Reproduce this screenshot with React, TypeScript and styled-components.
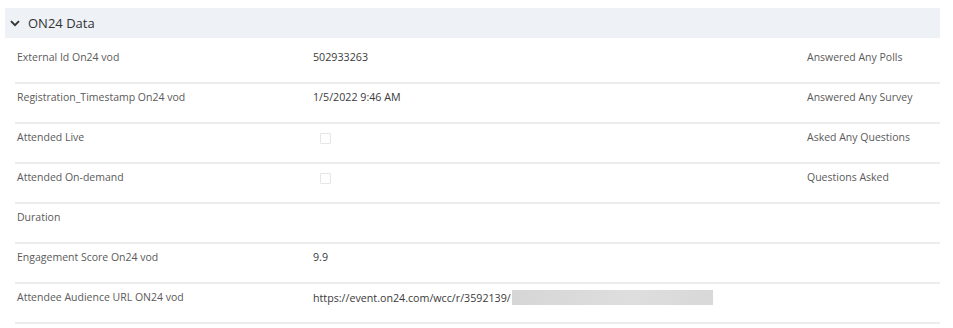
import styled, { createGlobalStyle } from "styled-components";

const GlobalStyle = createGlobalStyle`
  body {
    margin: 0;
    background: #ffffff;
    font-family: "Open Sans", "Noto Sans", sans-serif;
  }
`;

const Page = styled.div`
  padding: 8px 13px 0 5px;
`;

const SectionHeader = styled.div`
  display: flex;
  align-items: center;
  gap: 8px;
  height: 30px;
  padding-left: 5px;
  background-color: #eef1f6;
  color: #333;
  font-size: 13px;
`;

const Rows = styled.div`
  margin: 6px 0 0 10px;
`;

const Row = styled.div`
  display: grid;
  grid-template-columns: 296px 494px 1fr;
  height: 40px;
  box-sizing: border-box;
  border-bottom: 2px solid #ededed;
  font-size: 10.5px;
`;

const Cell = styled.div<{ $muted?: boolean }>`
  padding-top: 6px;
  padding-left: 2px;
  line-height: 15px;
  color: ${(p) => (p.$muted ? "#5a5a5a" : "#3a3a3a")};
  white-space: nowrap;
`;

const Value = styled(Cell)`
  font-size: 10.7px;
`;

const Checkbox = styled.span`
  display: inline-block;
  width: 9px;
  height: 9px;
  margin: 3px 0 0 7px;
  border: 1px solid #e6e6e6;
  border-radius: 1px;
`;

const Redacted = styled.span`
  display: inline-block;
  width: 201px;
  height: 15px;
  margin-left: 1px;
  vertical-align: -3px;
  background: linear-gradient(90deg, #d6d6d6, #dedede 60%, #d8d8d8);
`;

const Chevron = () => (
  <svg width="10" height="7" viewBox="0 0 10 7">
    <path d="M1 1.2 L5 5.2 L9 1.2" fill="none" stroke="#333" strokeWidth="1.9" />
  </svg>
);

type RowData = {
  label: string;
  value?: React.ReactNode;
  side?: string;
};

const rows: RowData[] = [
  { label: "External Id On24 vod", value: "502933263", side: "Answered Any Polls" },
  { label: "Registration_Timestamp On24 vod", value: "1/5/2022 9:46 AM", side: "Answered Any Survey" },
  { label: "Attended Live", value: <Checkbox />, side: "Asked Any Questions" },
  { label: "Attended On-demand", value: <Checkbox />, side: "Questions Asked" },
  { label: "Duration" },
  { label: "Engagement Score On24 vod", value: "9.9" },
  {
    label: "Attendee Audience URL ON24 vod",
    value: (
      <>
        https://event.on24.com/wcc/r/3592139/
        <Redacted />
      </>
    ),
  },
];

export default function App() {
  return (
    <>
      <GlobalStyle />
      <Page>
        <SectionHeader>
          <Chevron />
          ON24 Data
        </SectionHeader>
        <Rows>
          {rows.map((r) => (
            <Row key={r.label}>
              <Cell $muted>{r.label}</Cell>
              <Value>{r.value}</Value>
              <Cell $muted>{r.side}</Cell>
            </Row>
          ))}
        </Rows>
      </Page>
    </>
  );
}
